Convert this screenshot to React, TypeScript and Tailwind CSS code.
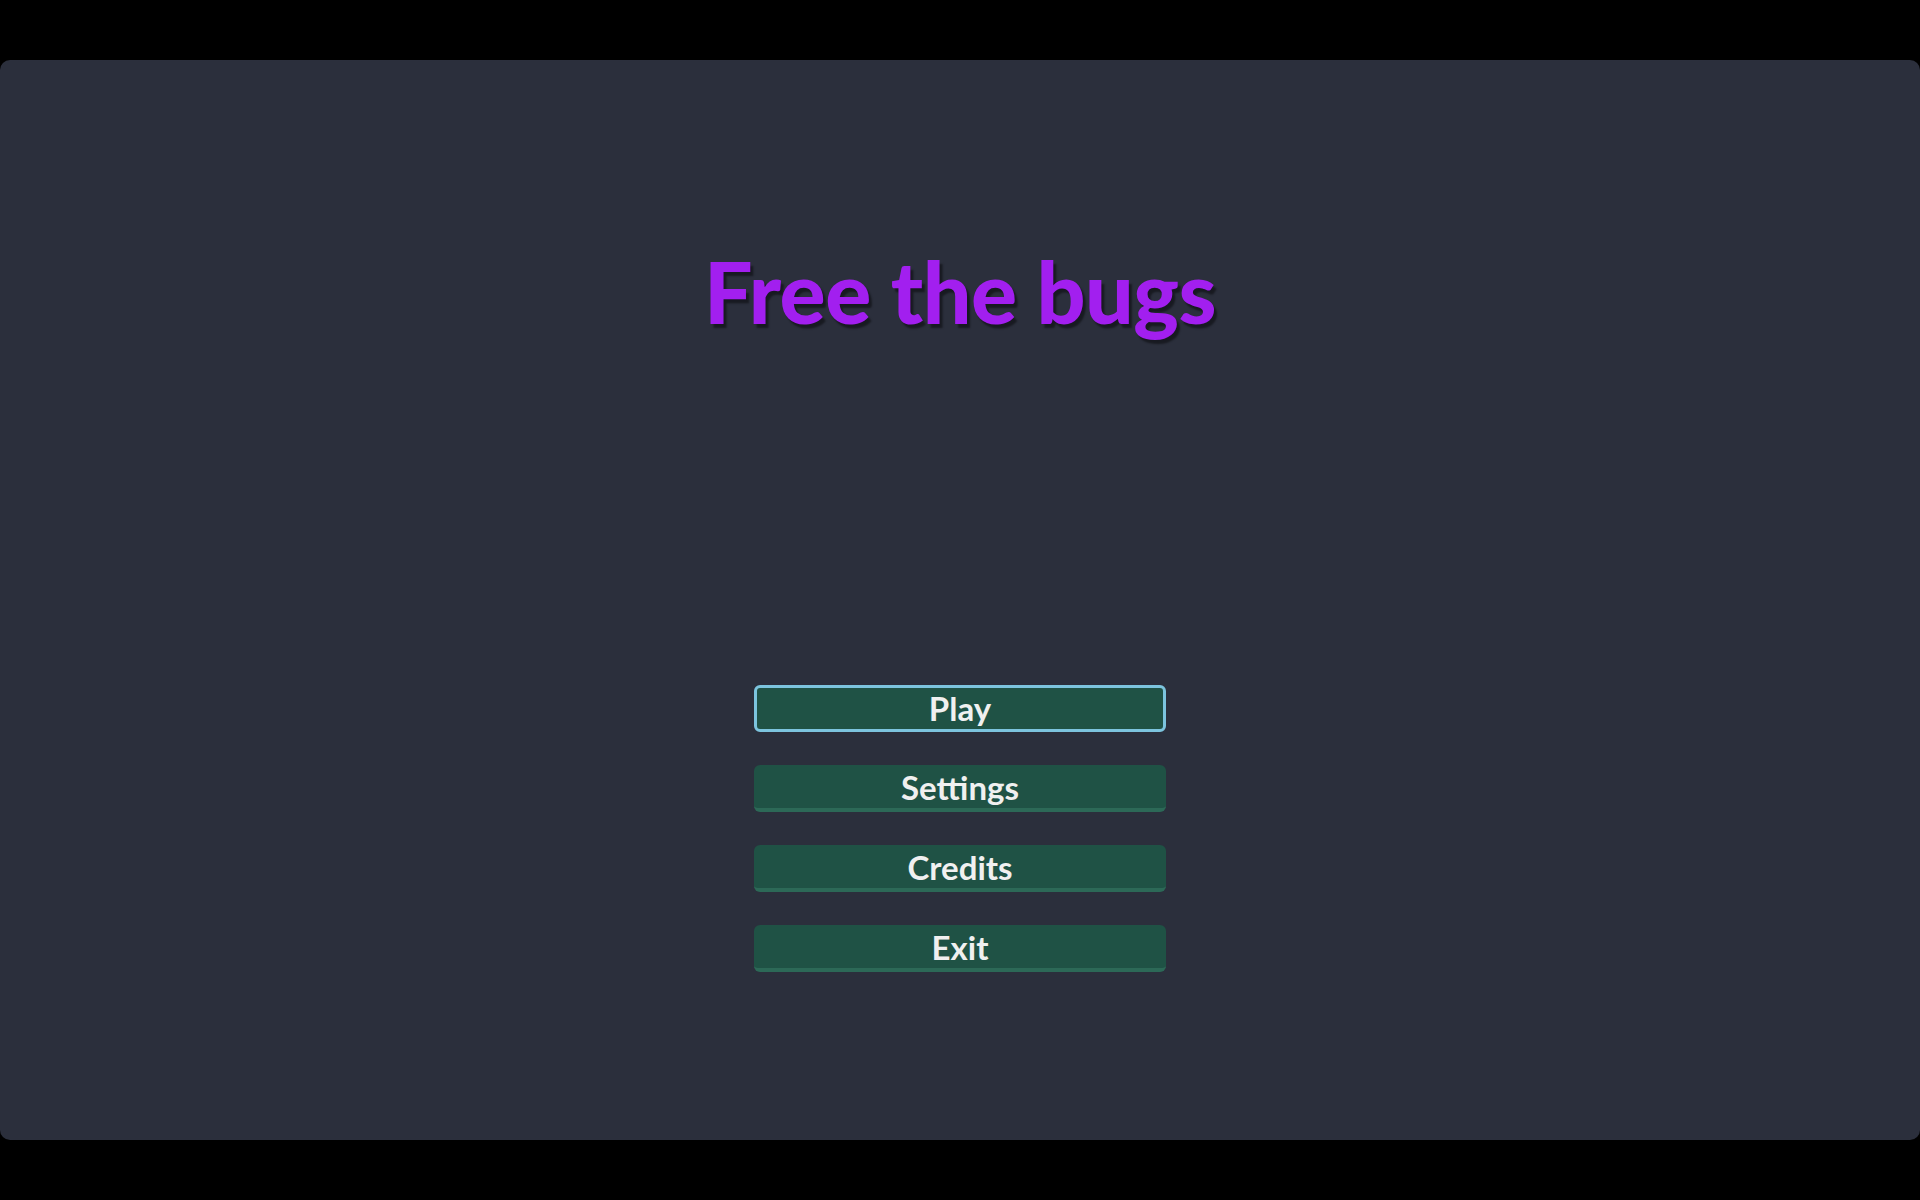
import React from 'react';

const menuItems = ['Play', 'Settings', 'Credits', 'Exit'];

const MenuButton: React.FC<{ label: string; focused?: boolean }> = ({ label, focused }) => (
  <button
    type="button"
    className={
      focused
        ? 'w-[412px] h-[47px] rounded-[6px] bg-[#1f5245] border-[3px] border-[#7cc4de] text-[#f0f0f0] text-[33px] font-bold leading-none flex items-center justify-center'
        : 'w-[412px] h-[47px] rounded-[6px] bg-[#1f5245] border-b-[4px] border-[#2c6957] text-[#f0f0f0] text-[33px] font-bold leading-none flex items-center justify-center pt-[2px]'
    }
  >
    {label}
  </button>
);

export default function App() {
  return (
    <div className="w-full h-[1200px] bg-black py-[60px]" style={{ fontFamily: 'Lato, "Open Sans", sans-serif' }}>
      <div className="h-full w-full rounded-[10px] bg-[#2b2f3c] flex flex-col items-center">
        <h1 className="mt-[188px] text-[86px] font-black leading-none text-[#a21fef] tracking-[-0.5px] [text-shadow:3px_4px_2px_rgba(0,0,0,0.45)]">
          Free the bugs
        </h1>
        <div className="mt-[351px] flex flex-col gap-[33px]">
          {menuItems.map((item, i) => (
            <MenuButton key={item} label={item} focused={i === 0} />
          ))}
        </div>
      </div>
    </div>
  );
}
